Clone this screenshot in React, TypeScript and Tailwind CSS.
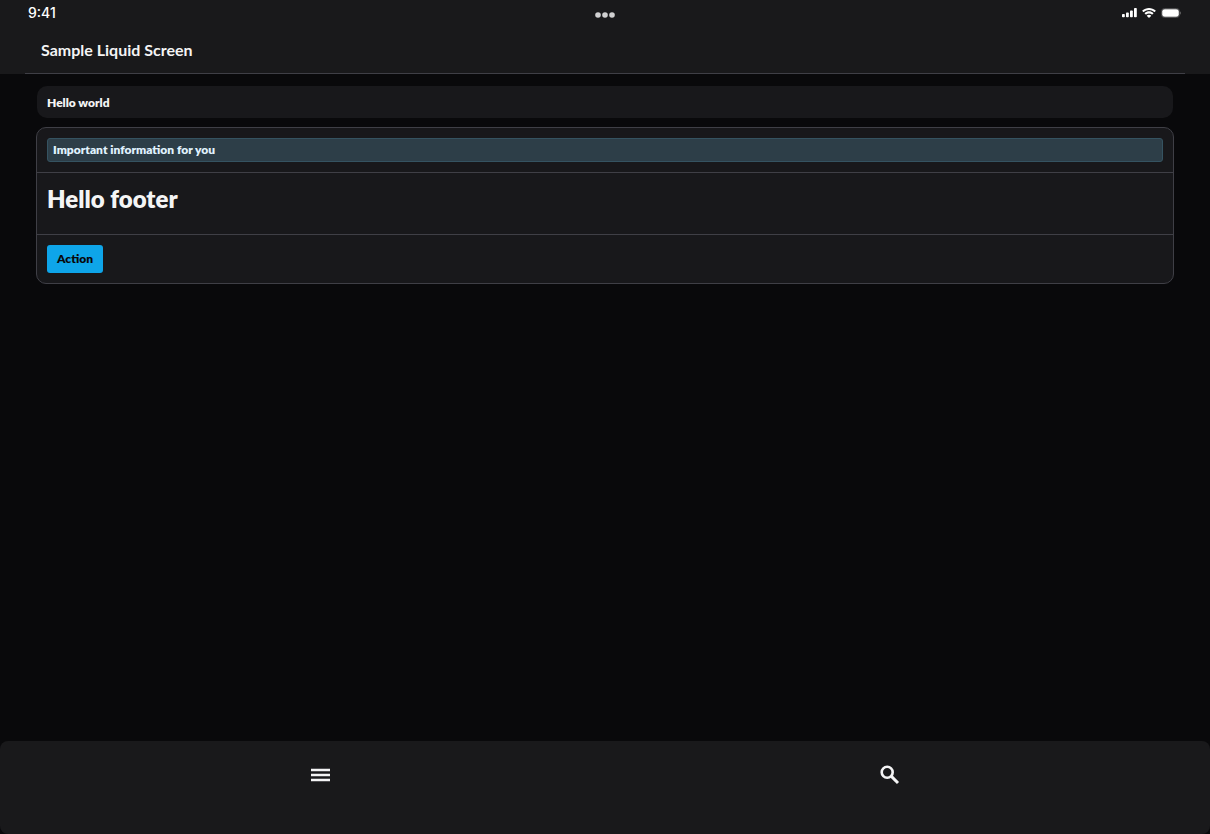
import type { ReactNode } from "react";

function StatusBar() {
  return (
    <div className="grid h-[27px] grid-cols-3 items-start px-7">
      <time className="pt-[5px] font-['Inter','Liberation_Sans',sans-serif] text-[14px] leading-4 font-medium text-white">
        9:41
      </time>
      <svg
        className="mt-3 justify-self-center"
        width="20"
        height="6"
        viewBox="0 0 20 6"
        fill="#d0d0d1"
        aria-hidden="true"
      >
        <circle cx="3" cy="3" r="2.8" />
        <circle cx="10" cy="3" r="2.8" />
        <circle cx="17" cy="3" r="2.8" />
      </svg>
      <div className="flex items-center gap-[5px] justify-self-end pt-2 pr-px">
        <svg width="15" height="10" viewBox="0 0 15 10" fill="#fff" aria-hidden="true">
          <rect x="0" y="6" width="2.8" height="3.2" rx="0.8" />
          <rect x="4" y="4.4" width="2.8" height="4.8" rx="0.8" />
          <rect x="8" y="2.4" width="2.8" height="6.8" rx="0.8" />
          <rect x="12" y="0" width="2.8" height="9.2" rx="0.8" />
        </svg>
        <svg width="14" height="10" viewBox="0 0 17 12" fill="#fff" aria-hidden="true">
          <path d="M8.5 2.4c2.4 0 4.6.9 6.4 2.5.1.1.3.1.5 0l1.2-1.3c.1-.1.1-.4 0-.5C12-1 5-1 .4 3.1c-.1.1-.1.4 0 .5l1.2 1.3c.2.1.4.1.5 0C3.9 3.3 6.1 2.4 8.5 2.4zm0 4.1c1.3 0 2.6.5 3.5 1.4.2.1.4.1.5 0l1.3-1.3c.1-.2.1-.4 0-.5-3-2.8-7.5-2.8-10.5 0-.2.1-.2.3 0 .5l1.3 1.3c.1.1.3.1.5 0 .9-.9 2.1-1.4 3.4-1.4zm2.5 3c.1-.1.1-.4 0-.5-1.5-1.2-3.6-1.2-5 0-.2.1-.2.4 0 .5l2.2 2.2c.2.2.4.2.6 0z" />
        </svg>
        <svg width="20" height="10" viewBox="0 0 20 10" aria-hidden="true">
          <rect x="0.5" y="0.5" width="18" height="9" rx="3" fill="none" stroke="#4d4d4f" />
          <rect x="1.2" y="1.2" width="16.6" height="7.6" rx="2.4" fill="#fff" />
          <path d="M19.2 3.3v3.4c.5-.3.8-1 .8-1.7s-.3-1.4-.8-1.7z" fill="#707071" />
        </svg>
      </div>
    </div>
  );
}

function NavButton({ label, children }: { label: string; children: ReactNode }) {
  return (
    <button
      type="button"
      aria-label={label}
      className="flex h-[68px] items-center justify-center text-[#f4f4f5]"
    >
      {children}
    </button>
  );
}

export default function App() {
  return (
    <div className="flex min-h-screen flex-col bg-[#09090b] font-['Carlito','Lato','Open_Sans',sans-serif] text-[#f4f4f5]">
      <header className="bg-[#19191b]">
        <StatusBar />
        <div className="mx-[25px] border-b border-[#3f3f46] px-4 py-[11px]">
          <h1 className="font-['Lato','Open_Sans',sans-serif] text-base leading-6 font-bold">
            Sample Liquid Screen
          </h1>
        </div>
      </header>

      <main className="flex flex-1 flex-col gap-[9px] px-9 pt-3 font-['Lato','Open_Sans',sans-serif]">
        <section className="mx-px rounded-[10px] bg-[#18181b] px-[10px] pt-[9px] pb-[7px] text-xs leading-4 font-extrabold">
          Hello world
        </section>

        <section className="divide-y divide-[#3f3f46] rounded-[10px] border border-[#3f3f46] bg-[#18181b]">
          <div className="p-[10px]">
            <p className="rounded-[3px] border border-[#355361] bg-[#2d3e48] px-[5px] py-[3px] text-xs leading-4 font-extrabold text-[#e0f2fe]">
              Important information for you
            </p>
          </div>
          <div className="px-[10px] pt-[10px] pb-[19px]">
            <h2 className="text-2xl leading-8 font-extrabold">Hello footer</h2>
          </div>
          <div className="p-[10px]">
            <button
              type="button"
              className="block rounded-[3px] bg-[#0ea5e9] px-[10px] py-1.5 text-xs leading-4 font-extrabold text-[#09090b]"
            >
              Action
            </button>
          </div>
        </section>
      </main>

      <nav className="grid h-[93px] grid-cols-2 items-start rounded-lg bg-[#19191b] px-9">
        <NavButton label="Menu">
          <svg width="20" height="14" viewBox="0 0 20 14" fill="currentColor" aria-hidden="true">
            <path d="M0 .7h19v2.5H0zM0 5.700h19v2.500H0zM0 10.700h19v2.500H0z" />
          </svg>
        </NavButton>
        <NavButton label="Search">
          <svg width="20" height="20" viewBox="0 0 20 20" fill="none" stroke="currentColor" aria-hidden="true">
            <circle cx="7.2" cy="7.2" r="5.500" strokeWidth="2.600" />
            <path d="M11.400 11.400 18 18" strokeWidth="3" />
          </svg>
        </NavButton>
      </nav>
    </div>
  );
}
